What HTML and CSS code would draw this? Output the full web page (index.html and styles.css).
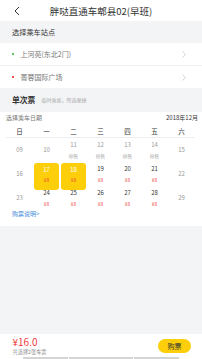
FILE: index.html
```html
<!DOCTYPE html>
<html lang="zh-CN">
<head>
<meta charset="utf-8">
<title>胖哒直通车郫县02(早班)</title>
<link rel="stylesheet" href="styles.css">
</head>
<body>
<div class="page">
  <header class="topbar">
    <span class="back">
      <svg width="6" height="10" viewBox="0 0 6 10"><path d="M5 1 L1 5 L5 9" fill="none" stroke="#333" stroke-width="1"/></svg>
    </span>
    <h1 class="title">胖哒直通车郫县02(早班)</h1>
    <span></span>
  </header>

  <div class="section-title">选择乘车站点</div>
  <ul class="stations">
    <li class="station">
      <span class="dot dot-green"></span>
      <span class="station-name">上河苑(东北2门)</span>
      <svg class="chev" width="4" height="7" viewBox="0 0 4 7"><path d="M0.5 0.5 L3.5 3.5 L0.5 6.5" fill="none" stroke="#c8c8c8" stroke-width="0.8"/></svg>
    </li>
    <li class="station">
      <span class="dot dot-red"></span>
      <span class="station-name">菁蓉国际广场</span>
      <svg class="chev" width="4" height="7" viewBox="0 0 4 7"><path d="M0.5 0.5 L3.5 3.5 L0.5 6.5" fill="none" stroke="#c8c8c8" stroke-width="0.8"/></svg>
    </li>
  </ul>

  <div class="ticket-head">
    <span class="ticket-title">单次票</span>
    <span class="ticket-sub">临时乘坐，所选便捷</span>
  </div>

  <section class="calendar">
    <div class="cal-top">
      <span class="cal-label">选择乘车日期</span>
      <span class="cal-month">2018年12月</span>
    </div>
    <div class="weekdays">
      <span>日</span><span>一</span><span>二</span><span>三</span><span>四</span><span>五</span><span>六</span>
    </div>
    <div class="days">
      <div class="day off"><span class="num">09</span></div>
      <div class="day off"><span class="num">10</span></div>
      <div class="day off"><span class="num">11</span><span class="sub">停售</span></div>
      <div class="day off"><span class="num">12</span><span class="sub">停售</span></div>
      <div class="day off"><span class="num">13</span><span class="sub">停售</span></div>
      <div class="day off"><span class="num">14</span><span class="sub">停售</span></div>
      <div class="day off"><span class="num">15</span></div>

      <div class="day off"><span class="num">16</span></div>
      <div class="day selected"><span class="num">17</span><span class="sub price">¥8</span></div>
      <div class="day selected"><span class="num">18</span><span class="sub price">¥8</span></div>
      <div class="day"><span class="num">19</span><span class="sub price">¥8</span></div>
      <div class="day"><span class="num">20</span><span class="sub price">¥8</span></div>
      <div class="day"><span class="num">21</span><span class="sub price">¥8</span></div>
      <div class="day off"><span class="num">22</span></div>

      <div class="day off"><span class="num">23</span></div>
      <div class="day"><span class="num">24</span><span class="sub price">¥8</span></div>
      <div class="day"><span class="num">25</span><span class="sub price">¥8</span></div>
      <div class="day"><span class="num">26</span><span class="sub price">¥8</span></div>
      <div class="day"><span class="num">27</span><span class="sub price">¥8</span></div>
      <div class="day"><span class="num">28</span><span class="sub price">¥8</span></div>
      <div class="day off"><span class="num">29</span></div>
    </div>
    <a class="notice" href="#">购票说明&gt;</a>
  </section>

  <main class="filler"></main>

  <footer class="bottombar">
    <div class="bar-row">
      <div class="total">
        <div class="amount">¥16.0</div>
        <div class="count">共选择2张车票</div>
      </div>
      <button class="buy">购票</button>
    </div>
    <div class="edges">
      <span class="edge e1"></span><span class="edge e2"></span><span class="edge e3"></span>
    </div>
  </footer>
</div>
</body>
</html>
```

FILE: styles.css
```css
* { box-sizing: border-box; margin: 0; padding: 0; }
html, body { width: 202px; height: 359px; overflow: hidden; }
body {
  background: #f3f4f6;
  font-family: "Noto Sans CJK SC", "Noto Sans", sans-serif;
  color: #333;
}
.page { display: flex; flex-direction: column; height: 359px; }

.topbar {
  height: 21px;
  background: #fff;
  display: grid;
  grid-template-columns: 30px 1fr 30px;
  align-items: center;
}
.back { display: flex; align-items: center; padding-left: 14px; height: 21px; }
.title {
  font-size: 9.5px;
  font-weight: normal;
  text-align: center;
  line-height: 21px;
  color: #333;
  padding-top: 1px;
}

.section-title {
  height: 22px;
  line-height: 22px;
  padding-left: 12px;
  font-size: 7.2px;
  color: #333;
}

.stations { list-style: none; background: #fff; }
.station {
  height: 22px;
  display: flex;
  align-items: center;
  padding: 0 16px 0 11.5px;
}
.station + .station { border-top: 1px solid #eeeeee; height: 23px; }
.dot { width: 2.5px; height: 2.5px; border-radius: 50%; margin-right: 6.5px; }
.dot-green { background: #2fb52f; }
.dot-red { background: #f21a1a; }
.station-name { flex: 1; font-size: 7px; color: #777; line-height: 10px; }
.chev { display: block; }

.ticket-head {
  height: 24px;
  display: flex;
  align-items: center;
  padding-left: 12px;
  gap: 6px;
}
.ticket-title { font-size: 7.8px; font-weight: bold; color: #333; line-height: 10px; }
.ticket-sub { font-size: 5px; color: #aaa; line-height: 8px; }

.calendar { background: #fff; padding: 0 5px 8px 6px; }
.cal-top {
  height: 12px;
  display: flex;
  justify-content: space-between;
  align-items: center;
}
.cal-label { font-size: 6px; color: #777; line-height: 8px; }
.cal-month { font-size: 6px; color: #333; line-height: 8px; margin-right: -1px; }

.weekdays {
  width: 189px;
  height: 14px;
  display: grid;
  grid-template-columns: repeat(7, 27px);
  align-items: center;
  border-bottom: 1px solid #eeeeee;
}
.weekdays span { text-align: center; font-size: 6.5px; color: #333; line-height: 8px; }

.days {
  width: 189px;
  display: grid;
  grid-template-columns: repeat(7, 27px);
  grid-auto-rows: 24px;
}
.day {
  display: flex;
  flex-direction: column;
  align-items: center;
  justify-content: center;
}
.num { font-size: 6px; line-height: 8px; color: #333; }
.sub { font-size: 4.8px; line-height: 7px; margin-top: 2.5px; color: #aaa; }
.price { color: #ee3b3b; }
.off .num { color: #999; }
.selected {
  align-self: start;
  height: 27px;
  margin: 0.5px 1px 0;
  padding-bottom: 3px;
  background: #fccf0a;
  border-radius: 3px;
}
.selected .num { color: #fff; }

.notice {
  display: block;
  margin: 0 0 0 6px;
  font-size: 6px;
  line-height: 8px;
  color: #4a90d9;
  text-decoration: none;
}

.filler { flex: 1; }

.bottombar { height: 25px; background: #fff; padding-top: 3px; }
.bar-row {
  display: flex;
  align-items: center;
  justify-content: space-between;
  padding: 0 11px 0 12.5px;
}
.amount { font-size: 10px; line-height: 10px; color: #f03c3c; }
.count { font-size: 5.2px; line-height: 7px; color: #888; margin-top: 0.5px; }
.buy {
  width: 33px;
  height: 14px;
  border: none;
  border-radius: 7px;
  background: #fccf0a;
  font-family: "Noto Sans CJK SC", sans-serif;
  font-size: 7px;
  color: #333;
  line-height: 14px;
}
.edges { display: flex; gap: 1px; margin: 2px 0 0 23px; }
.edge { height: 2px; background: #d4d4d4; }
.e1 { width: 45px; }
.e2 { width: 64px; }
.e3 { width: 45px; }
```
